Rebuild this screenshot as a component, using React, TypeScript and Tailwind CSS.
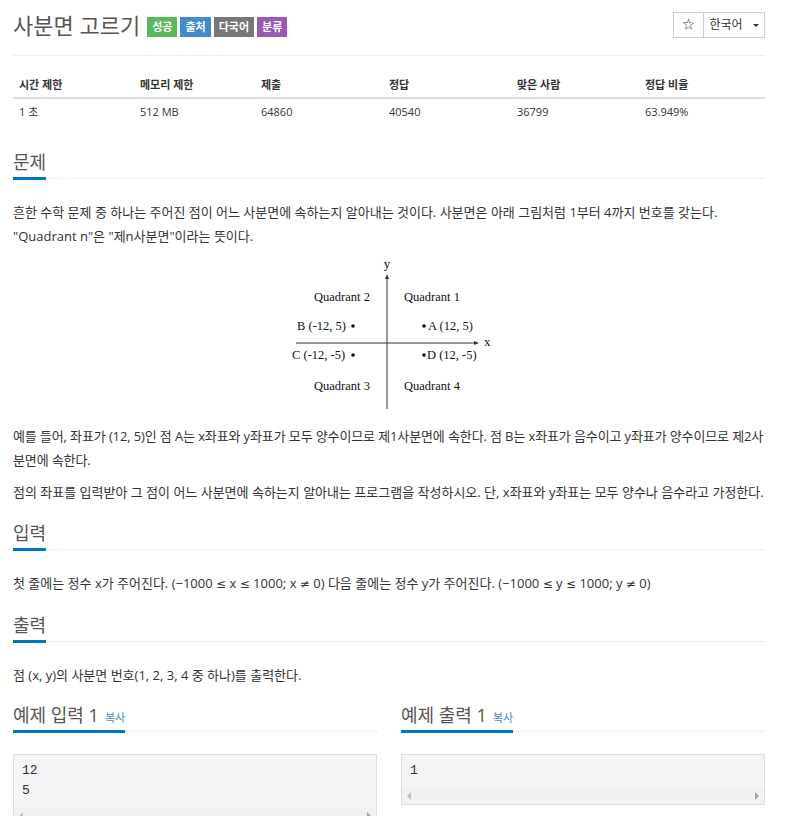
import React from 'react';

const stats = [
  { label: '시간 제한', value: '1 초' },
  { label: '메모리 제한', value: '512 MB' },
  { label: '제출', value: '64860' },
  { label: '정답', value: '40540' },
  { label: '맞은 사람', value: '36799' },
  { label: '정답 비율', value: '63.949%' },
];

const Heading = ({ children, mb = 'mb-[20px]' }: { children: React.ReactNode; mb?: string }) => (
  <div className={`flex items-end ${mb}`}>
    <h2 className="text-[18px] leading-[26px] text-[#555] border-b-[3px] border-[#0076c0] pb-[2px] whitespace-nowrap">
      {children}
    </h2>
    <div className="flex-1 border-b border-dotted border-[#ddd] mb-[1px]" />
  </div>
);

const Quadrants = () => (
  <svg width="226" height="156" viewBox="0 -4 226 156" className="mx-auto overflow-visible">
    <g fill="#111" fontFamily="'Liberation Serif', serif" fontSize="12.5">
      <text x="111" y="10" textAnchor="middle" fontSize="13">y</text>
      <line x1="111" y1="18" x2="111" y2="151" stroke="#333" strokeWidth="1" />
      <path d="M111 16 L109 21 L113 21 Z" fill="#333" />
      <line x1="20" y1="85" x2="201" y2="85" stroke="#333" strokeWidth="1" />
      <path d="M203 85 L198 83 L198 87 Z" fill="#333" />
      <text x="208" y="88" fontSize="13">x</text>
      <text x="38" y="43">Quadrant 2</text>
      <text x="128" y="43">Quadrant 1</text>
      <text x="21" y="72">B (-12, 5)</text>
      <circle cx="77" cy="68" r="1.8" />
      <circle cx="148" cy="68" r="1.8" />
      <text x="152" y="72">A (12, 5)</text>
      <text x="16" y="101">C (-12, -5)</text>
      <circle cx="77" cy="97" r="1.8" />
      <circle cx="148" cy="97" r="1.8" />
      <text x="151" y="101">D (12, -5)</text>
      <text x="38" y="132">Quadrant 3</text>
      <text x="128" y="132">Quadrant 4</text>
    </g>
  </svg>
);

const ScrollBar = () => (
  <div className="h-[17px] bg-[#f1f1f1] flex items-center justify-between px-[5px]">
    <span className="w-0 h-0 border-y-[4px] border-y-transparent border-r-[4px] border-r-[#c1c1c1]" />
    <span className="w-0 h-0 border-y-[4px] border-y-transparent border-l-[4px] border-l-[#a3a3a3]" />
  </div>
);

const Sample = ({ title, lines }: { title: string; lines: string[] }) => (
  <div>
    <Heading mb="mb-[21px]">
      {title}
      <span className="text-[11px] leading-[11px] text-[#428bca] ml-[6px]">복사</span>
    </Heading>
    <div className="border border-[#ddd] bg-[#f5f5f7]">
      <pre className="px-[8px] py-[6px] font-['Liberation_Mono',monospace] text-[13px] leading-[20px] text-[#333]">
        {lines.join('\n')}
      </pre>
      <ScrollBar />
    </div>
  </div>
);

const M = ({ children }: { children: React.ReactNode }) => (
  <span className="font-['DejaVu_Sans',sans-serif] text-[12px]">{children}</span>
);

const cols = 'grid grid-cols-[121px_121px_128px_128px_128px_1fr]';

const App = () => {
  return (
    <div className="w-[785px] bg-white pl-[13px] pr-[20px] pt-[11px] pb-[40px] text-[#333] font-['Open_Sans','Noto_Sans_CJK_KR',sans-serif]">
      <div className="flex items-start justify-between border-b border-[#eee] pb-[16px]">
        <div className="flex items-center gap-[7px]">
          <h1 className="text-[22px] leading-[28px] text-[#555]">사분면 고르기</h1>
          <div className="flex gap-[3px] mt-[3px]">
            <span className="bg-[#5cb85c] text-white text-[11px] font-bold h-[20px] leading-[20px] px-[5px]">성공</span>
            <span className="bg-[#428bca] text-white text-[11px] font-bold h-[20px] leading-[20px] px-[5px]">출처</span>
            <span className="bg-[#777] text-white text-[11px] font-bold h-[20px] leading-[20px] px-[5px]">다국어</span>
            <span className="bg-[#9b59b6] text-white text-[11px] font-bold h-[20px] leading-[20px] px-[5px]">분류</span>
          </div>
        </div>
        <div className="flex mt-[1px]">
          <button className="w-[31px] h-[26px] border border-[#ccc] text-[12px] text-[#333]">☆</button>
          <button className="w-[61px] h-[26px] border border-l-0 border-[#ccc] text-[12px] text-[#333] flex items-center justify-center gap-[10px]">
            한국어
            <span className="w-0 h-0 border-x-[3px] border-x-transparent border-t-[3px] border-t-[#333]" />
          </button>
        </div>
      </div>

      <div className="mt-[18px] text-[11px]">
        <div className={`${cols} border-b-2 border-[#ddd] h-[25px] items-center font-bold`}>
          {stats.map(s => (
            <div key={s.label} className="px-[6px]">{s.label}</div>
          ))}
        </div>
        <div className={`${cols} h-[26px] items-center`}>
          {stats.map(s => (
            <div key={s.label} className="px-[6px]">{s.value}</div>
          ))}
        </div>
      </div>

      <section className="mt-[24px]">
        <Heading>문제</Heading>
        <div className="text-[13px] leading-[24px]">
          <p>흔한 수학 문제 중 하나는 주어진 점이 어느 사분면에 속하는지 알아내는 것이다. 사분면은 아래 그림처럼 1부터 4까지 번호를 갖는다. "Quadrant n"은 "제n사분면"이라는 뜻이다.</p>
          <div className="mt-[6px] mb-[14px]">
            <Quadrants />
          </div>
          <p className="mb-[8px] break-all tracking-[-0.12px]">예를 들어, 좌표가 (12, 5)인 점 A는 x좌표와 y좌표가 모두 양수이므로 제1사분면에 속한다. 점 B는 x좌표가 음수이고 y좌표가 양수이므로 제2사분면에 속한다.</p>
          <p>점의 좌표를 입력받아 그 점이 어느 사분면에 속하는지 알아내는 프로그램을 작성하시오. 단, x좌표와 y좌표는 모두 양수나 음수라고 가정한다.</p>
        </div>
      </section>

      <section className="mt-[16px]">
        <Heading>입력</Heading>
        <p className="text-[13px] leading-[24px]">
          첫 줄에는 정수 x가 주어진다. (−1000 <M>≤</M> x <M>≤</M> 1000; x <M>≠</M> 0) 다음 줄에는 정수 y가 주어진다. (−1000 <M>≤</M> y <M>≤</M> 1000; y <M>≠</M> 0)
        </p>
      </section>

      <section className="mt-[16px]">
        <Heading>출력</Heading>
        <p className="text-[13px] leading-[24px]">점 (x, y)의 사분면 번호(1, 2, 3, 4 중 하나)를 출력한다.</p>
      </section>

      <div className="mt-[15px] grid grid-cols-2 gap-[24px]">
        <Sample title="예제 입력 1" lines={['12', '5']} />
        <Sample title="예제 출력 1" lines={['1']} />
      </div>
    </div>
  );
};

export default App;
